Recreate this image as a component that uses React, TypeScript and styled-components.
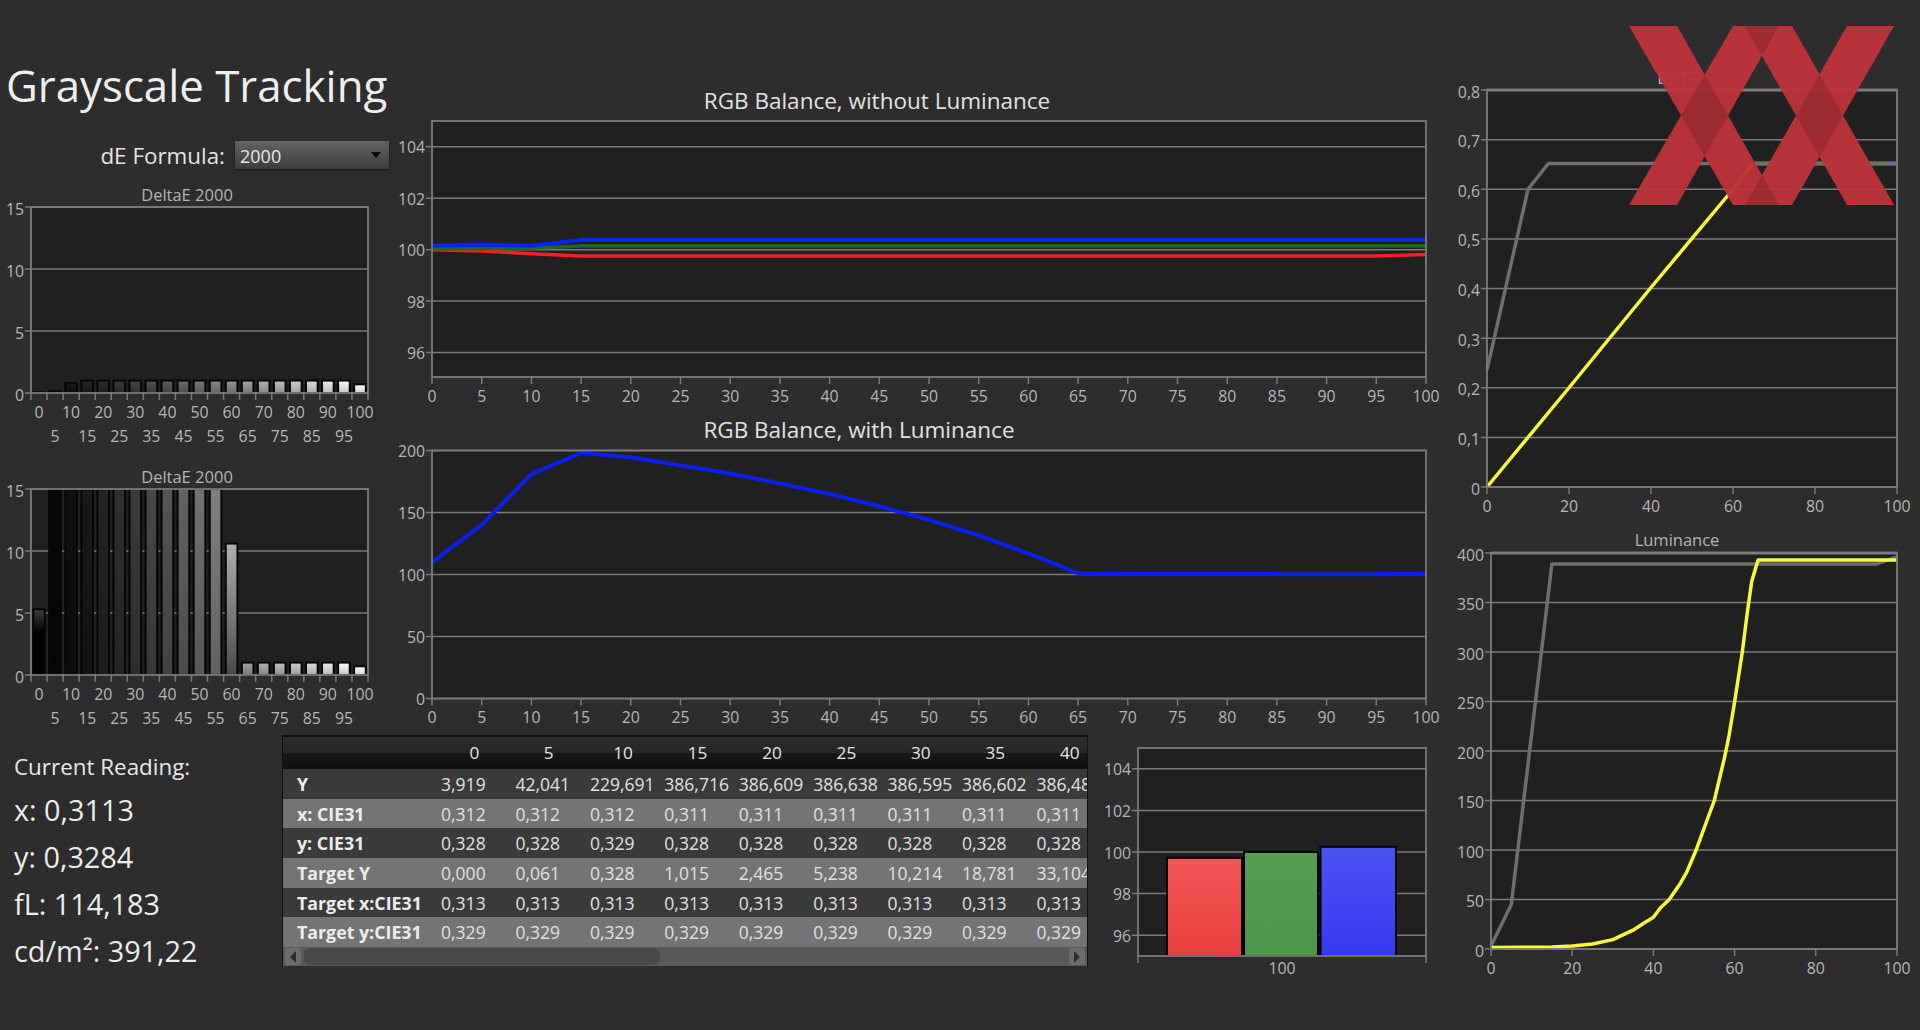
import React from "react";
import styled, { createGlobalStyle } from "styled-components";

const FONT = `"Open Sans", "Noto Sans", "Liberation Sans", sans-serif`;
const AXIS = "#7a7a7a";

const GlobalStyle = createGlobalStyle`
    html, body {
        margin: 0;
        padding: 0;
        background: #2d2d2d;
        font-family: ${FONT};
    }
`;

const Page = styled.div`
    width: 1920px;
    height: 1030px;
    display: flex;
    overflow: hidden;
    background: #2d2d2d;
`;

const MainArea = styled.div`
    width: 1440px;
    display: flex;
    flex-direction: column;
`;

const TopRow = styled.div`
    height: 730px;
    display: flex;
`;

const BottomRow = styled.div`
    height: 300px;
    display: flex;
`;

const LeftColumn = styled.div`
    width: 400px;
    display: flex;
    flex-direction: column;
`;

const CenterColumn = styled.div`
    width: 1040px;
    padding-top: 86px;
    display: flex;
    flex-direction: column;
`;

const RightColumn = styled.div`
    position: relative;
    width: 480px;
    padding-top: 69px;
    display: flex;
    flex-direction: column;
`;

const PageTitle = styled.h1`
    margin: 55px 0 26px 6px;
    font-size: 43.8px;
    line-height: 60px;
    font-weight: 400;
    color: #eeeeee;
    white-space: nowrap;
`;

const FormulaRow = styled.div`
    height: 28px;
    padding-right: 11px;
    margin-bottom: 17px;
    display: flex;
    justify-content: flex-end;
    align-items: center;
    gap: 10px;
`;

const FormulaLabel = styled.span`
    font-size: 22.4px;
    color: #e4e4e4;
`;

const SelectBox = styled.div`
    width: 154px;
    height: 28px;
    box-sizing: border-box;
    padding: 2px 8px 0 5px;
    display: flex;
    align-items: center;
    justify-content: space-between;
    background: linear-gradient(#646464, #3c3c3c);
    box-shadow: 0 1px 2px rgba(0, 0, 0, 0.5);
    font-size: 18px;
    color: #e6e6e6;
`;

const SelectArrow = styled.span`
    width: 0;
    height: 0;
    margin-top: -3px;
    border-left: 5px solid transparent;
    border-right: 5px solid transparent;
    border-top: 6px solid #0a0a0a;
`;

const SmallTitle = styled.div<{ $width: number }>`
    width: ${(p) => p.$width}px;
    height: 18px;
    line-height: 18px;
    text-align: center;
    font-size: 16.5px;
    color: #b4b4b4;
`;

const LargeTitle = styled.div<{ $width: number }>`
    width: ${(p) => p.$width}px;
    height: 30px;
    line-height: 30px;
    text-align: center;
    font-size: 22.5px;
    color: #e2e2e2;
`;

const ChartSvg = styled.svg`
    display: block;
    flex: none;
    overflow: visible;
`;

const AxisText = styled.text<{ $anchor?: string }>`
    font-family: ${FONT};
    font-size: 15.8px;
    fill: #b6b6b6;
    text-anchor: ${(p) => p.$anchor ?? "middle"};
    dominant-baseline: central;
`;

const ReadingPanel = styled.div`
    width: 282px;
    padding: 22px 0 0 14px;
    box-sizing: border-box;
    display: flex;
    flex-direction: column;
`;

const ReadingHead = styled.div`
    height: 34px;
    line-height: 30px;
    font-size: 22.4px;
    color: #e8e8e8;
`;

const ReadingValue = styled.div`
    height: 47px;
    line-height: 47px;
    font-size: 28.8px;
    color: #ececec;
    white-space: nowrap;
`;

const TablePanel = styled.div`
    width: 806px;
    height: 231px;
    margin-top: 5px;
    box-sizing: border-box;
    border-top: 2px solid #0e0e0e;
    border-left: 1px solid #111;
    border-right: 1px solid #111;
    overflow: hidden;
`;

const DataTable = styled.table`
    width: 824px;
    table-layout: fixed;
    border-collapse: collapse;
`;

const HeadCell = styled.th`
    width: 74.4px;
    height: 32px;
    padding: 0 0 2px;
    box-sizing: border-box;
    font-size: 17.2px;
    font-weight: 400;
    color: #e4e4e4;
    text-align: center;
    background: linear-gradient(#2d2d2d 0, #262626 50%, #181818 50%, #111 100%);
    &:first-child {
        width: 154px;
    }
`;

const DataRow = styled.tr<{ $light: boolean }>`
    height: 29.7px;
    background: ${(p) => (p.$light ? "#747474" : "#3a3a3a")};
`;

const RowLabel = styled.td`
    padding: 0 0 0 14px;
    font-size: 17.8px;
    font-weight: 700;
    color: #ececec;
    white-space: nowrap;
`;

const ValueCell = styled.td`
    padding: 0 0 0 4px;
    font-size: 17.5px;
    color: #e0e0e0;
    white-space: nowrap;
    overflow: hidden;
`;

const ScrollTrack = styled.div`
    height: 19px;
    padding: 0 2px;
    display: flex;
    align-items: center;
    gap: 3px;
    background: #585858;
`;

const ScrollButton = styled.div<{ $right?: boolean }>`
    width: 16px;
    height: 17px;
    border-radius: 3px;
    background: #6c6c6c;
    display: flex;
    align-items: center;
    justify-content: center;
    margin-left: ${(p) => (p.$right ? "auto" : "0")};
    &::before {
        content: "";
        border-top: 6px solid transparent;
        border-bottom: 6px solid transparent;
        ${(p) => (p.$right ? "border-left: 6px solid #2c2c2c;" : "border-right: 6px solid #2c2c2c;")}
    }
`;

const ScrollThumb = styled.div`
    width: 356px;
    height: 17px;
    border-radius: 6px;
    background: #4a4a4a;
`;

const LogoSvg = styled.svg`
    position: absolute;
    left: 189px;
    top: 26px;
    opacity: 0.96;
`;

type Box = { left: number; top: number; width: number; height: number };

function Axes({
    box,
    min,
    max,
    yTicks,
    heavyTop,
    labelShift = 1.5,
    children,
}: {
    box: Box;
    min: number;
    max: number;
    yTicks: number[];
    heavyTop?: boolean;
    labelShift?: number;
    children?: React.ReactNode;
}) {
    const y = (v: number) => box.top + box.height - ((v - min) / (max - min)) * box.height;
    return (
        <>
            <rect x={box.left} y={box.top} width={box.width} height={box.height} fill="#202020" />
            {yTicks.map((t) => (
                <g key={t}>
                    <line x1={box.left - 6} x2={box.left + box.width} y1={y(t)} y2={y(t)} stroke={AXIS} strokeWidth={1.5} />
                    <AxisText x={box.left - 7} y={y(t) + labelShift} $anchor="end">
                        {String(t).replace(".", ",")}
                    </AxisText>
                </g>
            ))}
            {children}
            <rect x={box.left} y={box.top} width={box.width} height={box.height} fill="none" stroke={AXIS} strokeWidth={1.8} />
            {heavyTop && (
                <line x1={box.left} x2={box.left + box.width} y1={box.top} y2={box.top} stroke={AXIS} strokeWidth={3} />
            )}
        </>
    );
}

type Series = { color: string; width: number; points: [number, number][] };

function LinePlot({
    svgWidth,
    svgHeight,
    box,
    min,
    max,
    yTicks,
    xStep,
    series,
    heavyTop,
    labelShift,
}: {
    svgWidth: number;
    svgHeight: number;
    box: Box;
    min: number;
    max: number;
    yTicks: number[];
    xStep: number;
    series: Series[];
    heavyTop?: boolean;
    labelShift?: number;
}) {
    const px = (v: number) => box.left + (v / 100) * box.width;
    const py = (v: number) => box.top + box.height - ((v - min) / (max - min)) * box.height;
    const xs: number[] = [];
    for (let v = 0; v <= 100; v += xStep) xs.push(v);
    return (
        <ChartSvg width={svgWidth} height={svgHeight}>
            <Axes box={box} min={min} max={max} yTicks={yTicks} heavyTop={heavyTop} labelShift={labelShift}>
                {series.map((s, i) => (
                    <polyline
                        key={i}
                        fill="none"
                        stroke={s.color}
                        strokeWidth={s.width}
                        strokeLinejoin="round"
                        points={s.points.map(([a, b]) => `${px(a)},${py(b)}`).join(" ")}
                    />
                ))}
            </Axes>
            {xs.map((v) => (
                <g key={v}>
                    <line x1={px(v)} x2={px(v)} y1={box.top + box.height} y2={box.top + box.height + 7} stroke={AXIS} strokeWidth={1.5} />
                    <AxisText x={px(v)} y={box.top + box.height + 18.5}>
                        {v}
                    </AxisText>
                </g>
            ))}
        </ChartSvg>
    );
}

function DeltaChart({ id, values, height }: { id: string; values: number[]; height: number }) {
    const box = { left: 31, top: 3, width: 337, height: 186 };
    const cell = box.width / values.length;
    const bottom = box.top + box.height;
    const py = (v: number) => bottom - (v / 15) * box.height;
    const shade = (g: number) => {
        const c = Math.round(Math.min(255, g)).toString(16).padStart(2, "0");
        return `#${c}${c}${c}`;
    };
    // tall bars stay almost flat, the short ones fade a little, the 60 bar fades a lot
    const stops = (v: number, i: number): [number, number] => {
        const g = 255 * Math.pow(i / 20, 1.25);
        if (i === 0) return [64, 0];
        if (v >= 15) return [g * 1.05, g * 0.8];
        if (v > 5) return [g * 1.3, g * 0.55];
        return [g + 14, g * 0.82];
    };
    return (
        <ChartSvg width={400} height={height}>
            <defs>
                {values.map((v, i) => {
                    const [top, end] = stops(v, i);
                    return (
                        <linearGradient key={i} id={`${id}${i}`} x1="0" y1="0" x2="0" y2="1">
                            <stop offset="0" stopColor={shade(top)} />
                            <stop offset={i === 0 ? "0.35" : "1"} stopColor={shade(end)} />
                        </linearGradient>
                    );
                })}
            </defs>
            <Axes box={box} min={0} max={15} yTicks={[0, 5, 10, 15]}>
                {values.map((v, i) => (
                    <rect
                        key={i}
                        x={box.left + i * cell + 2.2}
                        y={py(v)}
                        width={cell - 4.4}
                        height={bottom - py(v)}
                        fill={`url(#${id}${i})`}
                        stroke="#050505"
                        strokeWidth={2}
                    />
                ))}
            </Axes>
            {Array.from({ length: values.length + 1 }, (_, i) => (
                <line
                    key={i}
                    x1={box.left + i * cell}
                    x2={box.left + i * cell}
                    y1={bottom}
                    y2={bottom + 7}
                    stroke={AXIS}
                    strokeWidth={1.5}
                />
            ))}
            {values.map((_, i) => (
                <AxisText key={i} x={box.left + (i + 0.5) * cell} y={bottom + (i % 2 === 0 ? 19 : 43)}>
                    {i * 5}
                </AxisText>
            ))}
        </ChartSvg>
    );
}

function LevelBars() {
    const box = { left: 50, top: 18, width: 288, height: 208 };
    const bottom = box.top + box.height;
    const py = (v: number) => bottom - ((v - 95) / 10) * box.height;
    const bars = [
        { x: 79, w: 75, v: 99.72, id: "barRed", top: "#f45656", end: "#e83e3e" },
        { x: 156, w: 74, v: 100.0, id: "barGreen", top: "#549e54", end: "#4a964a" },
        { x: 232.5, w: 75.5, v: 100.25, id: "barBlue", top: "#4a54f2", end: "#3638f0" },
    ];
    return (
        <ChartSvg width={352} height={260}>
            <defs>
                {bars.map((b) => (
                    <linearGradient key={b.id} id={b.id} x1="0" y1="0" x2="0" y2="1">
                        <stop offset="0" stopColor={b.top} />
                        <stop offset="1" stopColor={b.end} />
                    </linearGradient>
                ))}
            </defs>
            <Axes box={box} min={95} max={105} yTicks={[96, 98, 100, 102, 104]} labelShift={0.5}>
                {bars.map((b) => (
                    <rect
                        key={b.id}
                        x={b.x}
                        y={py(b.v)}
                        width={b.w}
                        height={bottom - py(b.v)}
                        fill={`url(#${b.id})`}
                        stroke="#000"
                        strokeWidth={2}
                    />
                ))}
            </Axes>
            <line x1={box.left} x2={box.left} y1={bottom} y2={bottom + 7} stroke={AXIS} strokeWidth={1.5} />
            <line x1={box.left + box.width} x2={box.left + box.width} y1={bottom} y2={bottom + 7} stroke={AXIS} strokeWidth={1.5} />
            <AxisText x={194} y={bottom + 12}>
                100
            </AxisText>
        </ChartSvg>
    );
}

const xxBands = [
    "0,0 48,0 150,179 104,179",
    "104,0 150,0 48,179 0,179",
    "116,0 163,0 265,179 218,179",
    "218,0 265,0 163,179 116,179",
];

function Logo() {
    return (
        <LogoSvg width={265} height={179}>
            {xxBands.map((p) => (
                <polygon key={p} points={p} fill="#dc3c45" />
            ))}
            {xxBands.map((p) => (
                <polygon key={p} points={p} fill="#000" fillOpacity={0.14} />
            ))}
        </LogoSvg>
    );
}

const flatBlue: [number, number][] = [[0, 100.15], [5, 100.2], [10, 100.15], [15, 100.38], [100, 100.38]];
const flatGreen: [number, number][] = [[0, 100.03], [10, 100.05], [15, 100.14], [100, 100.14]];
const flatRed: [number, number][] = [[0, 100], [5, 99.95], [10, 99.84], [15, 99.75], [95, 99.75], [100, 99.81]];

const lumCurve: [number, number][] = [
    [0, 110], [5, 140], [10, 181], [15, 198], [20, 194.5], [25, 188], [30, 181.5], [35, 173.5], [40, 165],
    [45, 155], [50, 144], [55, 131.5], [60, 117], [65, 101], [70, 100.4], [85, 100.3], [95, 100.3], [100, 100.6],
];

const eotfGray: [number, number][] = [[0, 0.236], [10, 0.6], [15, 0.652], [100, 0.652]];
const eotfYellow: [number, number][] = [[0, 0], [20, 0.2], [40, 0.402], [60, 0.6], [65, 0.652], [100, 0.652]];

const lumGray: [number, number][] = [[0, 3], [5, 45], [15, 389], [95, 389], [100, 396]];
const lumYellow: [number, number][] = [
    [0, 1.5], [15, 2], [20, 3], [25, 5], [30, 9.5], [35, 19], [37.6, 26], [40, 32], [41.7, 41.4], [43.9, 50],
    [46.7, 66.7], [48.3, 78.5], [50.4, 98.7], [55, 150], [57.5, 193], [58.6, 215], [60, 249.5], [61.9, 300],
    [63.1, 339], [64.2, 371], [65.2, 385], [65.8, 393], [100, 393],
];

const tableHead = ["0", "5", "10", "15", "20", "25", "30", "35", "40"];
const tableRows: { label: string; values: string[] }[] = [
    { label: "Y", values: ["3,919", "42,041", "229,691", "386,716", "386,609", "386,638", "386,595", "386,602", "386,482"] },
    { label: "x: CIE31", values: ["0,312", "0,312", "0,312", "0,311", "0,311", "0,311", "0,311", "0,311", "0,311"] },
    { label: "y: CIE31", values: ["0,328", "0,328", "0,329", "0,328", "0,328", "0,328", "0,328", "0,328", "0,328"] },
    { label: "Target Y", values: ["0,000", "0,061", "0,328", "1,015", "2,465", "5,238", "10,214", "18,781", "33,104"] },
    { label: "Target x:CIE31", values: ["0,313", "0,313", "0,313", "0,313", "0,313", "0,313", "0,313", "0,313", "0,313"] },
    { label: "Target y:CIE31", values: ["0,329", "0,329", "0,329", "0,329", "0,329", "0,329", "0,329", "0,329", "0,329"] },
];

const delta1 = [0.05, 0.15, 0.8, 1, 1, 1, 1, 1, 1, 1, 1, 1, 1, 1, 1, 1, 1, 1, 1, 1, 0.7];
const delta2 = [5.3, 15, 15, 15, 15, 15, 15, 15, 15, 15, 15, 15, 10.6, 1, 1, 1, 1, 1, 1, 1, 0.7];

export default function App() {
    return (
        <Page>
            <GlobalStyle />
            <MainArea>
                <TopRow>
                    <LeftColumn>
                        <PageTitle>Grayscale Tracking</PageTitle>
                        <FormulaRow>
                            <FormulaLabel>dE Formula:</FormulaLabel>
                            <SelectBox>
                                2000
                                <SelectArrow />
                            </SelectBox>
                        </FormulaRow>
                        <SmallTitle $width={374}>DeltaE 2000</SmallTitle>
                        <DeltaChart id="deltaA" values={delta1} height={264} />
                        <SmallTitle $width={374}>DeltaE 2000</SmallTitle>
                        <DeltaChart id="deltaB" values={delta2} height={244} />
                    </LeftColumn>
                    <CenterColumn>
                        <LargeTitle $width={954}>RGB Balance, without Luminance</LargeTitle>
                        <LinePlot
                            svgWidth={1040}
                            svgHeight={299}
                            box={{ left: 32, top: 5, width: 994, height: 256 }}
                            min={95.05}
                            max={105}
                            yTicks={[96, 98, 100, 102, 104]}
                            xStep={5}
                            labelShift={0.5}
                            series={[
                                { color: "#ee2020", width: 3.5, points: flatRed },
                                { color: "#1f6a1f", width: 3.5, points: flatGreen },
                                { color: "#0a22ff", width: 4, points: flatBlue },
                            ]}
                        />
                        <LargeTitle $width={918}>RGB Balance, with Luminance</LargeTitle>
                        <LinePlot
                            svgWidth={1040}
                            svgHeight={285}
                            box={{ left: 32, top: 5.5, width: 994, height: 248 }}
                            min={0}
                            max={200}
                            yTicks={[0, 50, 100, 150, 200]}
                            xStep={5}
                            labelShift={0.5}
                            series={[{ color: "#0a1ff0", width: 4, points: lumCurve }]}
                        />
                    </CenterColumn>
                </TopRow>
                <BottomRow>
                    <ReadingPanel>
                        <ReadingHead>Current Reading:</ReadingHead>
                        <ReadingValue>x: 0,3113</ReadingValue>
                        <ReadingValue>y: 0,3284</ReadingValue>
                        <ReadingValue>fL: 114,183</ReadingValue>
                        <ReadingValue>cd/m²: 391,22</ReadingValue>
                    </ReadingPanel>
                    <TablePanel>
                        <DataTable>
                            <thead>
                                <tr>
                                    <HeadCell />
                                    {tableHead.map((h) => (
                                        <HeadCell key={h}>{h}</HeadCell>
                                    ))}
                                </tr>
                            </thead>
                            <tbody>
                                {tableRows.map((row, i) => (
                                    <DataRow key={row.label} $light={i % 2 === 1}>
                                        <RowLabel>{row.label}</RowLabel>
                                        {row.values.map((v, j) => (
                                            <ValueCell key={j}>{v}</ValueCell>
                                        ))}
                                    </DataRow>
                                ))}
                            </tbody>
                        </DataTable>
                        <ScrollTrack>
                            <ScrollButton />
                            <ScrollThumb />
                            <ScrollButton $right />
                        </ScrollTrack>
                    </TablePanel>
                    <LevelBars />
                </BottomRow>
            </MainArea>
            <RightColumn>
                <SmallTitle $width={474}>EOTF</SmallTitle>
                <LinePlot
                    svgWidth={480}
                    svgHeight={444}
                    box={{ left: 47, top: 3, width: 410, height: 397 }}
                    min={0}
                    max={0.8}
                    yTicks={[0, 0.1, 0.2, 0.3, 0.4, 0.5, 0.6, 0.7, 0.8]}
                    xStep={20}
                    heavyTop
                    series={[
                        { color: "#f8f83c", width: 3.5, points: eotfYellow },
                        { color: "#6e6e6e", width: 3.5, points: eotfGray },
                    ]}
                />
                <SmallTitle $width={474}>Luminance</SmallTitle>
                <LinePlot
                    svgWidth={480}
                    svgHeight={440}
                    box={{ left: 51, top: 4, width: 406, height: 396 }}
                    min={0}
                    max={400}
                    yTicks={[0, 50, 100, 150, 200, 250, 300, 350, 400]}
                    xStep={20}
                    heavyTop
                    series={[
                        { color: "#6e6e6e", width: 3.5, points: lumGray },
                        { color: "#f8f83c", width: 3.5, points: lumYellow },
                    ]}
                />
                <Logo />
            </RightColumn>
        </Page>
    );
}
